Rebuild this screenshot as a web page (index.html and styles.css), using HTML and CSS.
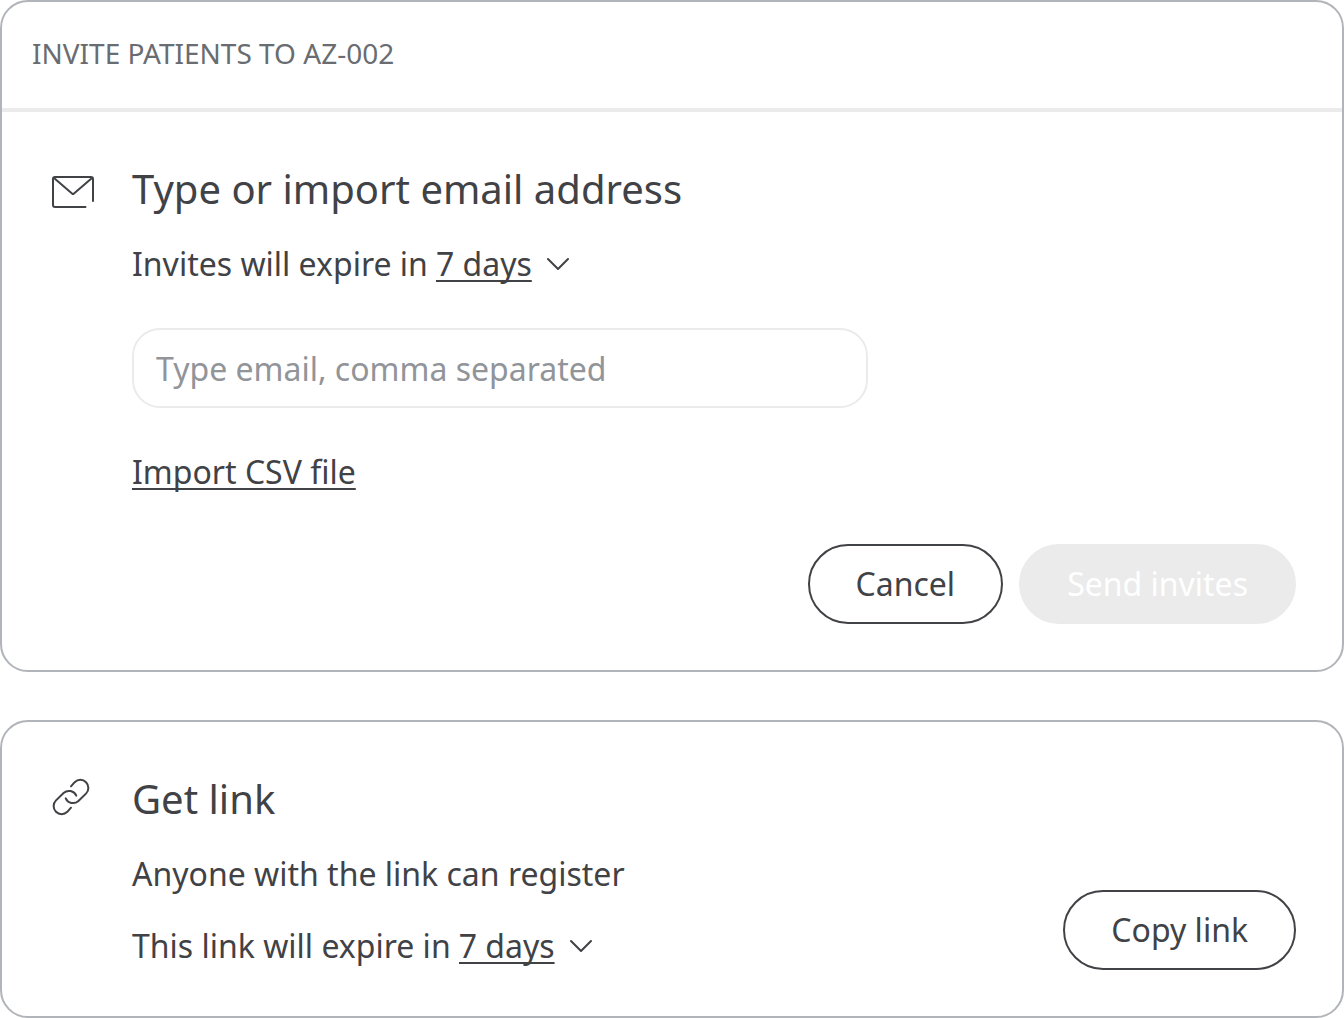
FILE: index.html
```html
<!DOCTYPE html>
<html lang="en">
<head>
<meta charset="utf-8">
<meta name="viewport" content="width=device-width, initial-scale=1">
<title>Invite patients to AZ-002</title>
<link rel="stylesheet" href="styles.css">
</head>
<body>
<main class="page">
  <form class="card">
    <header class="card-header">
      <h1 class="card-label">INVITE PATIENTS TO AZ-002</h1>
    </header>
    <div class="card-body">
      <svg class="icon" viewBox="0 0 48 48" aria-hidden="true">
        <path d="M43 35V13a2 2 0 0 0-2-2H5a2 2 0 0 0-2 2v26a2 2 0 0 0 2 2h30.500M4 12l18.300 15.700a1 1 0 0 0 1.400 0L42 12"/>
      </svg>
      <div class="content">
        <h2 class="title">Type or import email address</h2>
        <div class="expiry">
          <label for="invite-expiry">Invites will expire in</label>
          <select class="expiry-select" id="invite-expiry"><option>7 days</option></select>
          <svg class="chevron" viewBox="0 0 22 14" aria-hidden="true"><path d="M1 2L11 12L21 2"/></svg>
        </div>
        <input class="email-input" type="text" aria-label="Email addresses" placeholder="Type email, comma separated">
        <a class="import-link" href="#import">Import CSV file</a>
      </div>
      <div class="actions">
        <button class="button" type="button">Cancel</button>
        <button class="button button-disabled" type="submit" disabled>Send invites</button>
      </div>
    </div>
  </form>

  <section class="card">
    <div class="card-body card-body-split">
      <svg class="icon" viewBox="0 0 48 48" aria-hidden="true">
        <path d="M21 10.300L24.700 6.200A8 8 0 0 1 36 17.600L28.400 25A8 8 0 0 1 15.700 22.300M21 31.700L17.300 35.800A8 8 0 0 1 6 24.400L13.600 17A8 8 0 0 1 26.300 19.700"/>
      </svg>
      <div class="content">
        <h2 class="title">Get link</h2>
        <p class="text">Anyone with the link can register</p>
        <div class="expiry expiry-last">
          <label for="link-expiry">This link will expire in</label>
          <select class="expiry-select" id="link-expiry"><option>7 days</option></select>
          <svg class="chevron" viewBox="0 0 22 14" aria-hidden="true"><path d="M1 2L11 12L21 2"/></svg>
        </div>
      </div>
      <button class="button" type="button">Copy link</button>
    </div>
  </section>
</main>
</body>
</html>
```
FILE: styles.css
```css
* {
  box-sizing: border-box;
}

body {
  margin: 0;
  background: #fff;
  color: #414246;
  font-family: "Noto Sans", sans-serif;
  font-size: 32px;
  line-height: 44px;
}

h1,
h2,
p {
  margin: 0;
  font-weight: 400;
}

input,
select,
button {
  margin: 0;
  font: inherit;
  color: inherit;
}

.page {
  display: flex;
  flex-direction: column;
  gap: 48px;
}

.card {
  border: 2px solid #b1b4b9;
  border-radius: 28px;
}

.card-header {
  padding: 32px 30px 36px;
  border-bottom: 4px solid #ebebeb;
}

.card-label {
  color: #696c71;
  font-size: 28px;
  line-height: 38px;
}

.card-body {
  display: grid;
  grid-template-columns: 48px 1fr;
  column-gap: 34px;
  row-gap: 50px;
  padding: 48px 46px 46px 48px;
}

.card-body-split {
  grid-template-columns: 48px 1fr auto;
  align-items: end;
}

.icon {
  align-self: start;
  width: 48px;
  height: 48px;
  margin-top: 6px;
}

.icon,
.chevron {
  fill: none;
  stroke: #414246;
  stroke-width: 2;
  stroke-linecap: round;
  stroke-linejoin: round;
}

.title {
  margin-bottom: 24px;
  font-size: 40px;
  line-height: 58px;
}

.expiry {
  display: flex;
  align-items: center;
}

.expiry-last {
  margin: 28px 0 2px;
}

.expiry-select {
  appearance: none;
  field-sizing: content;
  margin-left: 8px;
  padding: 0;
  border: 0;
  background: transparent;
  text-decoration: underline;
  text-decoration-thickness: 2px;
  text-underline-offset: 4px;
  text-decoration-skip-ink: none;
}

.chevron {
  width: 22px;
  height: 14px;
  margin-left: 15px;
}

.email-input {
  display: block;
  width: 100%;
  max-width: 736px;
  height: 80px;
  margin: 42px 0;
  padding: 0 22px;
  border: 2px solid #ebebeb;
  border-radius: 28px;
  background: #fff;
}

.email-input::placeholder {
  color: #919499;
  opacity: 1;
}

.import-link {
  display: block;
  width: fit-content;
  color: inherit;
  text-decoration-thickness: 2px;
  text-underline-offset: 4px;
  text-decoration-skip-ink: none;
}

.actions {
  grid-column: 1 / -1;
  display: flex;
  justify-content: flex-end;
  gap: 16px;
}

.button {
  height: 80px;
  padding: 0 46px;
  border: 2px solid #414246;
  border-radius: 40px;
  background: #fff;
}

.button-disabled {
  border-color: #ebebeb;
  background: #ebebeb;
  color: #fff;
}
```
